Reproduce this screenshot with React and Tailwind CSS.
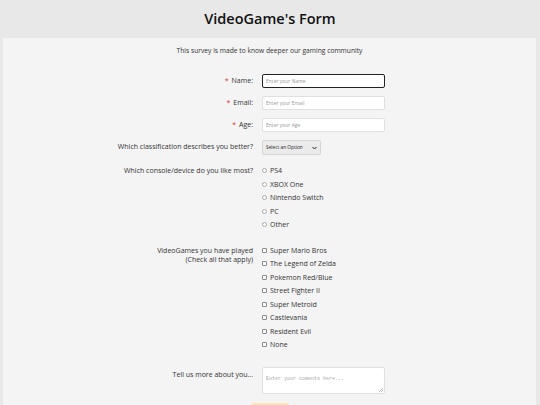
import React from "react";

const consoles = ["PS4", "XBOX One", "Nintendo Switch", "PC", "Other"];
const games = [
  "Super Mario Bros",
  "The Legend of Zelda",
  "Pokemon Red/Blue",
  "Street Fighter II",
  "Super Metroid",
  "Castlevania",
  "Resident Evil",
  "None",
];

const Row = ({ label, required, children, className = "" }) => (
  <div className={`flex ${className}`}>
    <div className="w-[259px] shrink-0 text-right pr-[9px] text-[7px] text-[#333]">
      {required && <span className="text-[#e03030] mr-[3px]">*</span>}
      {label}
    </div>
    <div className="flex-1 flex flex-col items-start">{children}</div>
  </div>
);

const App = () => {
  return (
    <div
      className="min-h-[405px] bg-[#e8e8e8] overflow-hidden"
      style={{ fontFamily: '"Open Sans", "Noto Sans", sans-serif' }}
    >
      {/* Header */}
      <h1 className="h-[38px] flex items-center justify-center text-[14.5px] font-semibold text-[#111] pb-[1px]">
        VideoGame's Form
      </h1>

      {/* Form card */}
      <form className="ml-[3px] w-[533px] bg-[#f4f4f4] pt-[8px] pb-[20px]">
        <p className="text-center text-[6.7px] leading-[10px] text-[#333]">
          This survey is made to know deeper our gaming community
        </p>

        <div className="mt-[18px] flex flex-col">
          <Row label="Name:" required className="items-center h-[14px] mb-[8px]">
            <input
              placeholder="Enter your Name"
              className="w-[123px] h-[14px] bg-white border border-[#222] rounded-[2px] px-[3px] text-[5px] placeholder:text-[#999] outline-none"
            />
          </Row>
          <Row label="Email:" required className="items-center h-[14px] mb-[8px]">
            <input
              placeholder="Enter your Email"
              className="w-[123px] h-[14px] bg-white border border-[#e0e0e0] rounded-[2px] px-[3px] text-[5px] placeholder:text-[#999] outline-none"
            />
          </Row>
          <Row label="Age:" required className="items-center h-[14px] mb-[8px]">
            <input
              placeholder="Enter your Age"
              className="w-[123px] h-[14px] bg-white border border-[#e0e0e0] rounded-[2px] px-[3px] text-[5px] placeholder:text-[#999] outline-none"
            />
          </Row>
          <Row label="Which classification describes you better?" className="items-center h-[15px] mb-[8px]">
            <div className="w-[59px] h-[15px] bg-[#ebebeb] border border-[#d6d6d6] rounded-[2px] flex items-center justify-between px-[3px] text-[4.8px] text-[#222]">
              <span>Select an Option</span>
              <svg width="5" height="4" viewBox="0 0 10 8">
                <path d="M1 2l4 4 4-4" fill="none" stroke="#222" strokeWidth="2" />
              </svg>
            </div>
          </Row>

          <Row label="Which console/device do you like most?" className="leading-[13.5px] mt-[1px]">
            {consoles.map((c) => (
              <label key={c} className="flex items-center h-[13.5px] text-[7px] text-[#333]">
                <span className="w-[5px] h-[5px] rounded-full border border-[#aaa] bg-white mr-[3px]" />
                {c}
              </label>
            ))}
          </Row>

          <Row
            label={
              <>
                VideoGames you have played
                <br />
                (Check all that apply)
              </>
            }
            className="leading-[9px] mt-[14px]"
          >
            {games.map((g) => (
              <label key={g} className="flex items-center h-[13.5px] text-[7px] text-[#333] -mt-[2px] mb-[2px]">
                <span className="w-[5px] h-[5px] rounded-[1px] border border-[#888] bg-white mr-[3px]" />
                {g}
              </label>
            ))}
          </Row>

          <Row label="Tell us more about you..." className="mt-[13px] leading-[16px]">
            <div className="relative w-[123px] h-[27px] bg-white border border-[#e0e0e0] rounded-[2px] px-[3px] py-[2px] leading-[8px]">
              <span
                className="text-[5px] text-[#aaa]"
                style={{ fontFamily: '"Liberation Mono", monospace' }}
              >
                Enter your coments here...
              </span>
              <svg className="absolute right-[1px] bottom-[1px]" width="4" height="4" viewBox="0 0 4 4">
                <path d="M4 0L0 4M4 2L2 4" stroke="#999" strokeWidth="0.6" />
              </svg>
            </div>
          </Row>

          <div className="flex justify-center mt-[9px]">
            <button type="button" className="w-[38px] h-[16px] bg-[#fde3b4] rounded-[2px] text-[7px] text-[#333]">
              Submit
            </button>
          </div>
        </div>
      </form>
    </div>
  );
};

export default App;
